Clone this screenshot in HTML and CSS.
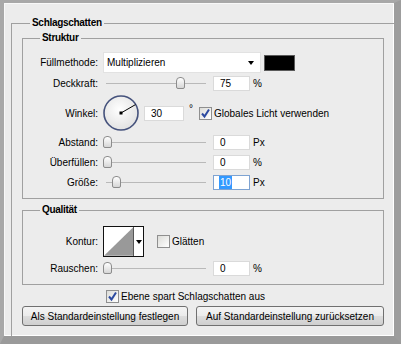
FILE: index.html
```html
<!DOCTYPE html>
<html lang="de">
<head>
  <meta charset="utf-8" />
  <title>Ebenenstil - Schlagschatten</title>
  <link rel="stylesheet" href="styles.css">
</head>
<body>
  <div class="window">
    <fieldset class="outer">
      <legend>Schlagschatten</legend>

      <!-- Struktur -->
      <fieldset class="box struktur">
        <legend>Struktur</legend>

        <div class="row tall">
          <span class="lbl">Füllmethode:</span>
          <div class="select">Multiplizieren<span class="caret"></span></div>
          <div class="swatch"></div>
        </div>

        <div class="row">
          <span class="lbl">Deckkraft:</span>
          <div class="slider"><span class="thumb" style="left: 73px"></span></div>
          <div class="field">75</div>
          <span class="unit">%</span>
        </div>

        <div class="row angle">
          <span class="lbl">Winkel:</span>
          <svg class="dial" width="36" height="36" viewBox="0 0 36 36">
            <defs>
              <radialGradient id="dialFill" cx="45%" cy="40%" r="60%">
                <stop offset="0%" stop-color="#ffffff"/>
                <stop offset="100%" stop-color="#e2e2e2"/>
              </radialGradient>
            </defs>
            <circle cx="18" cy="18" r="17" fill="url(#dialFill)" stroke="#45527c" stroke-width="1.6"/>
            <line x1="18" y1="18" x2="32.5" y2="9.6" stroke="#000" stroke-width="1"/>
            <rect x="16.5" y="16.5" width="3" height="3" fill="#000"/>
          </svg>
          <div class="field wide">30</div>
          <span class="unit deg">°</span>
          <span class="check on">
            <svg width="11" height="11" viewBox="0 0 11 11"><path d="M2 5.5 L4.5 8.5 L9 1.5" fill="none" stroke="#2c4aa0" stroke-width="2"/></svg>
          </span>
          <span>Globales Licht verwenden</span>
        </div>

        <div class="row">
          <span class="lbl">Abstand:</span>
          <div class="slider"><span class="thumb" style="left: 0px"></span></div>
          <div class="field">0</div>
          <span class="unit">Px</span>
        </div>

        <div class="row">
          <span class="lbl">Überfüllen:</span>
          <div class="slider"><span class="thumb" style="left: 0px"></span></div>
          <div class="field">0</div>
          <span class="unit">%</span>
        </div>

        <div class="row">
          <span class="lbl">Größe:</span>
          <div class="slider"><span class="thumb" style="left: 9px"></span></div>
          <div class="field focus"><span class="sel">10</span></div>
          <span class="unit">Px</span>
        </div>
      </fieldset>

      <!-- Qualität -->
      <fieldset class="box qualitaet">
        <legend>Qualität</legend>

        <div class="row contour-row">
          <span class="lbl">Kontur:</span>
          <div class="contour">
            <svg width="30" height="29" viewBox="0 0 30 29">
              <polygon points="0,29 30,0 30,29" fill="#999999"/>
            </svg>
            <div class="contour-drop"><span class="caret"></span></div>
          </div>
          <span class="check glatt"></span>
          <span>Glätten</span>
        </div>

        <div class="row">
          <span class="lbl">Rauschen:</span>
          <div class="slider"><span class="thumb" style="left: 0px"></span></div>
          <div class="field">0</div>
          <span class="unit">%</span>
        </div>
      </fieldset>

      <div class="check-line">
        <span class="check on">
          <svg width="11" height="11" viewBox="0 0 11 11"><path d="M2 5.5 L4.5 8.5 L9 1.5" fill="none" stroke="#2c4aa0" stroke-width="2"/></svg>
        </span>
        <span>Ebene spart Schlagschatten aus</span>
      </div>

      <div class="buttons">
        <button class="btn first">Als Standardeinstellung festlegen</button>
        <button class="btn second">Auf Standardeinstellung zurücksetzen</button>
      </div>
    </fieldset>
  </div>
</body>
</html>
```

FILE: styles.css
```css
* {
  box-sizing: border-box;
}

body {
  margin: 0;
  background-color: #ececec;
  font-family: "Liberation Sans", Arial, sans-serif;
  font-size: 10px;
  color: #000;
}

.window {
  width: 401px;
  height: 344px;
  background-color: #ececec;
  border-style: solid;
  border-width: 3px 7px 8px 4px;
  border-color: #a8a8a8 #9d9d9d #9a9a9a #a8a8a8;
  box-shadow: inset 1px 1px 0 #f8f8f8, inset -1px -1px 0 #ffffff;
  padding: 14px 0 0 7px;
  overflow: hidden;
}

/* group boxes */
fieldset {
  margin: 0;
  min-width: 0;
}

legend {
  font-weight: bold;
  line-height: 12px;
  padding: 0 2px;
  letter-spacing: -0.3px;
}

.outer {
  height: 319px;
  padding: 0 10px;
  border: 0;
  border-top: 1px solid #a0a0a0;
  border-left: 1px solid #a0a0a0;
}

.outer > legend {
  margin-left: 8px;
}

.box {
  border: 1px solid #a0a0a0;
  padding: 8px 0 6px;
}

.box > legend {
  margin-left: 17px;
}

.struktur {
  margin-top: 3px;
}

.qualitaet {
  margin-top: 5px;
  padding-top: 10px;
}

/* rows */
.row {
  display: flex;
  align-items: center;
  height: 20px;
  white-space: nowrap;
}

.row.tall {
  height: 21px;
}

.row.angle {
  height: 38px;
  margin-top: 1px;
}

.row.contour-row {
  height: 31px;
  margin-bottom: 1px;
}

.lbl {
  flex: none;
  width: 75px;
  margin-right: 5px;
  text-align: right;
}

/* blend mode select */
.select {
  display: flex;
  align-items: center;
  justify-content: space-between;
  width: 158px;
  height: 21px;
  padding: 0 6px 0 3px;
  background-color: #fff;
  border: 1px solid #e2e2e2;
}

.caret {
  width: 0;
  height: 0;
  border-left: 3.5px solid transparent;
  border-right: 3.5px solid transparent;
  border-top: 4px solid #000;
}

.swatch {
  width: 31px;
  height: 16px;
  margin-left: 3px;
  background-color: #000;
  border: 1px solid #5a5a5a;
}

/* sliders */
.slider {
  position: relative;
  flex: none;
  width: 103px;
  height: 14px;
  margin-right: 7px;
}

.slider::before {
  content: "";
  position: absolute;
  left: 3px;
  right: 0;
  top: 7px;
  height: 1px;
  background-color: #b9b9b9;
}

.thumb {
  position: absolute;
  top: 1px;
  width: 9px;
  height: 12px;
  border: 1px solid #8c8c8c;
  border-radius: 4px 4px 2px 2px;
  background: linear-gradient(#ffffff, #d6d6d6);
}

/* number fields */
.field {
  flex: none;
  width: 37px;
  height: 15px;
  padding-left: 6px;
  line-height: 13px;
  background-color: #fff;
  border: 1px solid #dadada;
}

.field.wide {
  width: 40px;
  margin-left: 5px;
}

.field.focus {
  border-color: #7ea3d2;
  padding-left: 5px;
}

.sel {
  display: inline-block;
  padding: 0 1px;
  background-color: #3399ff;
  color: #fff;
}

.unit {
  margin-left: 3px;
}

.unit.deg {
  margin-left: 5px;
  margin-right: 6px;
  align-self: flex-start;
  margin-top: 9px;
}

.dial {
  flex: none;
}

/* checkboxes */
.check {
  display: inline-flex;
  align-items: center;
  justify-content: center;
  flex: none;
  width: 13px;
  height: 13px;
  margin-right: 2px;
  border: 1px solid #8f8f8f;
  background: linear-gradient(135deg, #dcdcd8, #ffffff);
}

.check.glatt {
  margin-left: 13px;
}

.check-line {
  display: flex;
  align-items: center;
  height: 14px;
  margin: 4px 0 0 84px;
}

/* contour picker */
.contour {
  display: flex;
  width: 41px;
  height: 31px;
  background-color: #fff;
  border: 1px solid #111;
}

.contour svg {
  display: block;
}

.contour-drop {
  display: flex;
  align-items: center;
  justify-content: center;
  width: 10px;
  border-left: 1px solid #555;
}

/* buttons */
.buttons {
  display: flex;
  gap: 8px;
  margin-top: 3px;
}

.btn {
  height: 20px;
  padding: 0;
  font-family: "Liberation Sans", Arial, sans-serif;
  font-size: 10px;
  color: #000;
  border: 1px solid #707070;
  border-radius: 3px;
  background: linear-gradient(#f4f4f4 0%, #ebebeb 50%, #dddddd 51%, #cfcfcf 100%);
}

.btn.first {
  width: 167px;
}

.btn.second {
  width: 189px;
}
```
